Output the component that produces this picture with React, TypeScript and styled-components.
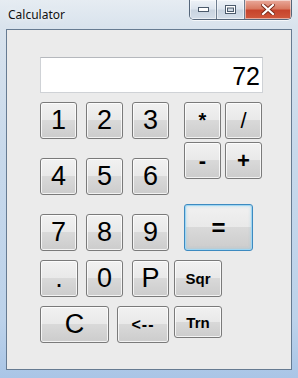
import React from "react";
import styled, { createGlobalStyle } from "styled-components";

interface KeyProps {
  $w?: number;
  $h?: number;
  $fs?: number;
  $ml?: number;
  $ls?: number;
  $bold?: boolean;
  $default?: boolean;
}

const GlobalStyle = createGlobalStyle`
  html, body {
    margin: 0;
    padding: 0;
    width: 298px;
    height: 378px;
    overflow: hidden;
  }
  body {
    font-family: "Liberation Sans", Arial, sans-serif;
  }
`;

const Window = styled.div`
  width: 298px;
  height: 378px;
  box-sizing: border-box;
  display: flex;
  flex-direction: column;
  padding: 0 6px 8px;
  background: linear-gradient(
    180deg,
    #e6ecf2 0%,
    #d9e3ed 7%,
    #c8d9eb 40%,
    #bcd2ea 85%,
    #a9c5e6 100%
  );
`;

const TitleBar = styled.div`
  height: 29px;
  display: flex;
  align-items: flex-start;
  flex-shrink: 0;
`;

const Title = styled.span`
  margin: 9px 0 0 2px;
  font-family: "Noto Sans", "Liberation Sans", sans-serif;
  font-size: 12px;
  line-height: 12px;
  color: #111;
  text-shadow: 0 0 6px rgba(255, 255, 255, 0.9);
`;

const CaptionGroup = styled.div`
  margin-left: auto;
  display: flex;
  height: 19px;
  border: 1px solid #55667a;
  border-top: none;
  border-radius: 0 0 5px 5px;
  overflow: hidden;
  box-shadow: 0 1px 0 rgba(255, 255, 255, 0.7);
`;

const CaptionButton = styled.div<{ $w: number; $close?: boolean }>`
  width: ${(p) => p.$w}px;
  height: 100%;
  display: flex;
  align-items: center;
  justify-content: center;
  box-sizing: border-box;
  border-right: ${(p) => (p.$close ? "none" : "1px solid #6d7d8f")};
  box-shadow: inset 0 0 0 1px rgba(255, 255, 255, 0.5);
  background: ${(p) =>
    p.$close
      ? "linear-gradient(180deg, #e9a99b 0%, #d97a62 45%, #c7442c 55%, #d0583c 100%)"
      : "linear-gradient(180deg, #eef2f7 0%, #dde5ee 45%, #c9d4e0 55%, #d4dee9 100%)"};
`;

const Client = styled.div`
  flex: 1;
  box-sizing: border-box;
  border: 1px solid #667b92;
  background: #ebebeb;
  padding: 27px 0 0 33px;
  display: flex;
  flex-direction: column;
`;

const Display = styled.div`
  width: 223px;
  height: 36px;
  box-sizing: border-box;
  background: #fff;
  border: 1px solid #cfd2d6;
  border-top-color: #b5b8bd;
  text-align: right;
  font-family: "Liberation Sans", Arial, sans-serif;
  font-size: 25px;
  line-height: 36px;
  padding-right: 2px;
  color: #000;
`;

const TopSection = styled.div`
  display: flex;
  margin-top: 9px;
`;

const NumPad = styled.div`
  display: grid;
  grid-template-columns: repeat(3, 37px);
  grid-auto-rows: 37px;
  column-gap: 9px;
  row-gap: 19px;
`;

const OpPad = styled.div`
  margin-left: 15px;
  display: flex;
  flex-direction: column;
`;

const OpRow = styled.div<{ $mt?: number }>`
  display: flex;
  gap: 4px;
  margin-top: ${(p) => p.$mt ?? 0}px;
`;

const BottomRow = styled.div<{ $mt: number }>`
  display: flex;
  align-items: flex-start;
  margin-top: ${(p) => p.$mt}px;
`;

const Key = styled.button<KeyProps>`
  width: ${(p) => p.$w ?? 37}px;
  height: ${(p) => p.$h ?? 37}px;
  margin: 0 0 0 ${(p) => p.$ml ?? 0}px;
  flex-shrink: 0;
  box-sizing: border-box;
  padding: 0;
  display: flex;
  align-items: center;
  justify-content: center;
  font-family: "Liberation Sans", Arial, sans-serif;
  font-size: ${(p) => p.$fs ?? 27}px;
  font-weight: ${(p) => (p.$bold ? 700 : 400)};
  letter-spacing: ${(p) => p.$ls ?? 0}px;
  color: #000;
  border-radius: 3px;
  border: 1px solid ${(p) => (p.$default ? "#3d8ac0" : "#7a7a7a")};
  background: linear-gradient(
    180deg,
    #f1f1f1 0%,
    #e9e9e9 49%,
    #d9d9d9 50%,
    #cccccc 100%
  );
  box-shadow: ${(p) =>
    p.$default
      ? "inset 0 0 0 1px #9fd6f2, inset 0 0 3px 1px rgba(120, 200, 240, 0.5)"
      : "inset 0 0 0 1px rgba(255, 255, 255, 0.75)"};
  cursor: default;
  outline: none;
`;

const MinGlyph = () => (
  <svg width="11" height="5" viewBox="0 0 11 5">
    <rect x="0.5" y="0.5" width="10" height="4" fill="#fff" stroke="#4b5a6b" />
  </svg>
);

const MaxGlyph = () => (
  <svg width="11" height="9" viewBox="0 0 11 9">
    <rect x="0.5" y="0.5" width="10" height="8" fill="#fff" stroke="#4b5a6b" />
    <rect x="2.5" y="3" width="6" height="3.5" fill="#cfd8e2" stroke="#4b5a6b" />
  </svg>
);

const CloseGlyph = () => (
  <svg width="14" height="11" viewBox="0 0 14 11">
    <path
      d="M2 1 L12 10 M12 1 L2 10"
      stroke="#7a2a1a"
      strokeWidth="4"
      strokeLinecap="square"
    />
    <path
      d="M2 1 L12 10 M12 1 L2 10"
      stroke="#fff"
      strokeWidth="2.2"
      strokeLinecap="square"
    />
  </svg>
);

const digits = ["1", "2", "3", "4", "5", "6", "7", "8", "9"];

export default function App() {
  return (
    <>
      <GlobalStyle />
      <Window>
        <TitleBar>
          <Title>Calculator</Title>
          <CaptionGroup>
            <CaptionButton $w={27}>
              <MinGlyph />
            </CaptionButton>
            <CaptionButton $w={28}>
              <MaxGlyph />
            </CaptionButton>
            <CaptionButton $w={46} $close>
              <CloseGlyph />
            </CaptionButton>
          </CaptionGroup>
        </TitleBar>
        <Client>
          <Display>72</Display>
          <TopSection>
            <NumPad>
              {digits.map((d) => (
                <Key key={d}>{d}</Key>
              ))}
            </NumPad>
            <OpPad>
              <OpRow>
                <Key $fs={20} $bold>*</Key>
                <Key $fs={22}>/</Key>
              </OpRow>
              <OpRow $mt={3}>
                <Key $fs={22} $bold>-</Key>
                <Key $fs={22} $bold>+</Key>
              </OpRow>
              <OpRow $mt={25}>
                <Key $w={69} $h={47} $fs={24} $bold $default>
                  =
                </Key>
              </OpRow>
            </OpPad>
          </TopSection>
          <BottomRow $mt={9}>
            <Key $w={38}>.</Key>
            <Key $ml={8}>0</Key>
            <Key $ml={9}>P</Key>
            <Key $w={48} $fs={15} $ml={5} $bold>
              Sqr
            </Key>
          </BottomRow>
          <BottomRow $mt={9}>
            <Key $w={69}>C</Key>
            <Key $w={52} $fs={16} $ml={8} $ls={1} $bold>
              &lt;--
            </Key>
            <Key $w={48} $h={32} $fs={15} $ml={5} $bold>
              Trn
            </Key>
          </BottomRow>
        </Client>
      </Window>
    </>
  );
}
